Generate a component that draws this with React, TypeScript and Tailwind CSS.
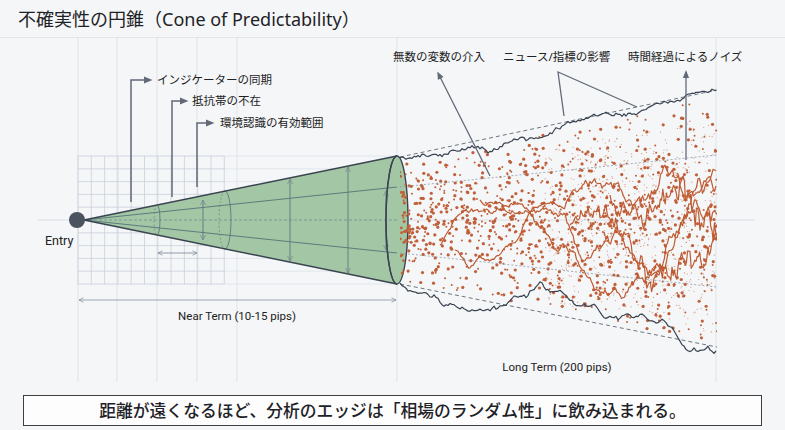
import React from "react";

// seeded random so the noise looks the same on every render
let seed = 1;
const reseed = (s: number) => {
  seed = s;
};
const rnd = () => {
  seed = (seed * 16807) % 2147483647;
  return seed / 2147483647;
};
const gauss = () => {
  const u = Math.max(rnd(), 1e-9);
  const v = rnd();
  return Math.sqrt(-2 * Math.log(u)) * Math.cos(2 * Math.PI * v);
};

const X0 = 400;
const X1 = 717;
const yUp = (x: number) => 157 - 0.2114 * (x - X0);
const yLo = (x: number) => 284 + 0.1987 * (x - X0);
const tOf = (x: number) => (x - X0) / (X1 - X0);

const walk = (
  s: number,
  x0: number,
  x1: number,
  y0: number,
  step: number,
  target: (x: number) => number,
  vol: (x: number) => number,
  k: number,
  drift = 0,
  pad = -100
) => {
  reseed(s);
  let y = y0;
  let v = 0;
  let d = `M${x0} ${y0}`;
  for (let x = x0 + step; x <= x1; x += step) {
    v = v * 0.93 + gauss() * drift;
    y += v + (target(x) - y) * k + gauss() * vol(x);
    const lo = yUp(x) + pad;
    const hi = yLo(x) - pad;
    if (y < lo) {
      y = lo + Math.abs(gauss()) * 3;
      v = Math.abs(v) * 0.5;
    }
    if (y > hi) {
      y = hi - Math.abs(gauss()) * 3;
      v = -Math.abs(v) * 0.5;
    }
    d += ` L${x.toFixed(1)} ${y.toFixed(1)}`;
  }
  return d;
};

type Dot = { x: number; y: number; r: number };
const dots: Dot[] = [];
reseed(20240611);
for (let i = 0; i < 1050; i++) {
  const x = X0 + 3 + rnd() * (X1 - X0 - 3);
  const top = yUp(x) + 8;
  const bot = yLo(x) - 4;
  const c = (top + bot) / 2;
  const h = (bot - top) / 2;
  const y = rnd() < 0.5 ? top + rnd() * (bot - top) : c + (rnd() + rnd() - 1) * h;
  dots.push({ x, y, r: rnd() < 0.55 ? 1.6 : 1.0 });
}
const fine: Dot[] = [];
for (let i = 0; i < 650; i++) {
  const x = 545 + rnd() * (X1 - 545);
  const top = yUp(x) + 25;
  const bot = yLo(x) - 12;
  const y = top + rnd() * (bot - top);
  fine.push({ x, y, r: 0.6 });
}
// a few dots on the mouth of the cone
for (let i = 0; i < 16; i++) {
  dots.push({ x: 395 + rnd() * 9, y: 168 + rnd() * 108, r: 1.4 });
}

const orange = [
  walk(11, 440, X1, 245, 1.5, () => 215, (x) => 0.9 + 4 * tOf(x) ** 2, 0.008, 0.55, 28),
  walk(23, 455, X1, 250, 1.5, () => 230, (x) => 0.9 + 4.5 * tOf(x) ** 2, 0.01, 0.5, 28),
  walk(37, 480, X1, 200, 1.5, () => 205, (x) => 1 + 4 * tOf(x) ** 2, 0.01, 0.5, 28),
  walk(41, 570, X1, 225, 1.2, () => 220, (x) => 2 + 6 * tOf(x) ** 2, 0.04, 0.4, 30),
  walk(59, 610, X1, 195, 1.2, () => 210, (x) => 2.5 + 6 * tOf(x) ** 2, 0.05, 0.4, 30),
];

const topWalk = walk(71, 400, X1, 158, 2, (x) => yUp(x) + 6 - 9 * tOf(x), () => 1.4, 0.1, 0.15);
const botWalk = walk(83, 400, X1, 283, 2, (x) => yLo(x) + 2 + 9 * tOf(x), () => 1.6, 0.06, 0.35);

const faintV = [78, 117, 157, 197, 237, 397, 716];
const gridV = Array.from({ length: 12 }, (_, i) => 78 + i * 13.3);
const gridH = Array.from({ length: 11 }, (_, i) => 156 + i * 12.8);

const ink = "#3a4350";
const anno = "#626a77";

export default function App() {
  return (
    <div className="w-[785px] h-[430px] bg-[#f4f6f8] flex flex-col overflow-hidden font-['Noto_Sans','Noto_Sans_CJK_JP',sans-serif] text-[#1e2226]">
      <header className="h-[38px] px-[18px] flex items-center border-b border-[#e2e6ea]">
        <h1 className="text-[18px] leading-none">不確実性の円錐（Cone of Predictability）</h1>
      </header>

      <svg width={785} height={356} viewBox="0 38 785 356" className="block shrink-0">
        <defs>
          <marker id="tri" viewBox="0 0 10 10" refX="5" refY="5" markerWidth="6" markerHeight="6" orient="auto-start-reverse">
            <path d="M0 1 L10 5 L0 9 z" fill={anno} />
          </marker>
          <marker id="open" viewBox="0 0 10 10" refX="9" refY="5" markerWidth="7" markerHeight="7" orient="auto-start-reverse">
            <path d="M1 1 L9 5 L1 9" fill="none" stroke="#7b8794" strokeWidth="1.2" />
          </marker>
          <clipPath id="band">
            <rect x={X0} y={40} width={X1 - X0} height={340} />
          </clipPath>
        </defs>

        {faintV.map((x) => (
          <line key={x} x1={x} y1={38} x2={x} y2={382} stroke="#dfe4e9" strokeWidth={1} />
        ))}
        <line x1={38} y1={220} x2={755} y2={220} stroke="#d8dee4" strokeWidth={1} />

        {gridH.map((y) => (
          <line key={"h" + y} x1={224} y1={y} x2={397} y2={y} stroke="#dde3e9" strokeWidth={0.8} />
        ))}
        {gridH.map((y) => (
          <line key={"gh" + y} x1={78} y1={y} x2={224} y2={y} stroke="#c9d1da" strokeWidth={0.8} />
        ))}
        {gridV.map((x) => (
          <line key={"gv" + x} x1={x} y1={156} x2={x} y2={284} stroke="#c9d1da" strokeWidth={0.8} />
        ))}

        {/* cone */}
        <polygon points="84,220 397,156 397,284" fill="#a3c7a4" />
        <ellipse cx={397} cy={220} rx={11} ry={64} fill="#a3c7a4" stroke={ink} strokeWidth={1.4} />
        <line x1={84} y1={220} x2={397} y2={187} stroke="#57707a" strokeWidth={0.9} />
        <line x1={84} y1={220} x2={397} y2={253} stroke="#57707a" strokeWidth={0.9} />
        <line x1={84} y1={220} x2={397} y2={220} stroke="#6d8590" strokeWidth={0.7} strokeDasharray="3 2" />
        <path d="M157 205 A3 15 0 0 1 157 235" fill="none" stroke="#5d7680" strokeWidth={0.9} />
        <path d="M157 205 A3 15 0 0 0 157 235" fill="none" stroke="#5d7680" strokeWidth={0.6} strokeDasharray="2 2" />
        <path d="M225 191 A6 29 0 0 1 225 249" fill="none" stroke="#5d7680" strokeWidth={0.9} />
        <path d="M225 191 A6 29 0 0 0 225 249" fill="none" stroke="#5d7680" strokeWidth={0.6} strokeDasharray="2 2" />
        {[
          [203, 200, 240],
          [290, 179, 261],
          [348, 167, 273],
          [386, 191, 250],
        ].map(([x, a, b]) => (
          <line key={x} x1={x} y1={a} x2={x} y2={b} stroke="#5d7680" strokeWidth={0.9} markerStart="url(#open)" markerEnd="url(#open)" />
        ))}
        <line x1={84} y1={220} x2={397} y2={156} stroke={ink} strokeWidth={1.5} />
        <line x1={84} y1={220} x2={397} y2={284} stroke={ink} strokeWidth={1.5} />
        <path d="M397 156 A11 64 0 0 0 397 284" fill="none" stroke={ink} strokeWidth={1.4} />

        <line x1={158} y1={253} x2={197} y2={253} stroke="#7b8794" strokeWidth={0.8} markerStart="url(#open)" markerEnd="url(#open)" />
        <line x1={79} y1={300} x2={396} y2={300} stroke="#8a95a1" strokeWidth={0.8} markerStart="url(#open)" markerEnd="url(#open)" />

        {/* entry */}
        <circle cx={77} cy={220} r={8} fill="#4b5360" />
        <text x={45} y={245} fontSize={12.5} fontFamily="Roboto, sans-serif" fill="#222">Entry</text>
        <text x={237} y={320} fontSize={11.5} fontFamily="Roboto, sans-serif" fill="#222" textAnchor="middle">Near Term (10-15 pips)</text>

        {/* random zone */}
        <g clipPath="url(#band)">
          {fine.map((d, i) => (
            <circle key={"f" + i} cx={d.x} cy={d.y} r={d.r} fill="#c9704a" opacity={0.7} />
          ))}
          {dots.map((d, i) => (
            <circle key={"d" + i} cx={d.x} cy={d.y} r={d.r} fill="#c0603a" />
          ))}
          {orange.map((d, i) => (
            <path key={"o" + i} d={d} fill="none" stroke="#bf5a31" strokeWidth={1.2} strokeLinejoin="round" />
          ))}
        </g>
        <line x1={400} y1={187} x2={717} y2={155} stroke="#8b9aaa" strokeWidth={0.8} strokeDasharray="2 2" />
        <line x1={400} y1={253} x2={717} y2={287} stroke="#8b9aaa" strokeWidth={0.8} strokeDasharray="2 2" />
        <line x1={400} y1={157} x2={717} y2={90} stroke="#5e6673" strokeWidth={0.9} strokeDasharray="4 3" />
        <line x1={400} y1={284} x2={717} y2={347} stroke="#5e6673" strokeWidth={0.9} strokeDasharray="4 3" />
        <path d={topWalk} fill="none" stroke={ink} strokeWidth={1.2} strokeLinejoin="round" />
        <path d={botWalk} fill="none" stroke={ink} strokeWidth={1.2} strokeLinejoin="round" />
        <text x={557} y={371} fontSize={11.5} fontFamily="Roboto, sans-serif" fill="#222" textAnchor="middle">Long Term (200 pips)</text>

        {/* left annotations */}
        <polyline points="131,202 131,80 148,80" fill="none" stroke={anno} strokeWidth={1.5} markerEnd="url(#tri)" />
        <polyline points="172,197 172,101 184,101" fill="none" stroke={anno} strokeWidth={1.5} markerEnd="url(#tri)" />
        <polyline points="197,187 197,123 210,123" fill="none" stroke={anno} strokeWidth={1.5} markerEnd="url(#tri)" />
        <g fontSize={11.5} fill="#222">
          <text x={157} y={84}>インジケーターの同期</text>
          <text x={192} y={105}>抵抗帯の不在</text>
          <text x={220} y={127}>環境認識の有効範囲</text>
        </g>

        {/* right annotations */}
        <line x1={490} y1={176} x2={439} y2={75} stroke={anno} strokeWidth={1.3} markerEnd="url(#tri)" />
        <polyline points="564,116 558,72 637,107" fill="none" stroke={anno} strokeWidth={1.3} />
        <line x1={686} y1={160} x2={686} y2={74} stroke={anno} strokeWidth={1.3} markerEnd="url(#tri)" />
        <g fontSize={11.5} fill="#222">
          <text x={393} y={61}>無数の変数の介入</text>
          <text x={503} y={61}>ニュース/指標の影響</text>
          <text x={628} y={61}>時間経過によるノイズ</text>
        </g>
      </svg>

      <div className="px-[23px] pt-px">
        <div className="h-[31px] border border-[#3f3f3f] bg-[#fdfdfd] flex items-center justify-center text-[16.8px] font-medium">
          距離が遠くなるほど、分析のエッジは「相場のランダム性」に飲み込まれる。
        </div>
      </div>
    </div>
  );
}
